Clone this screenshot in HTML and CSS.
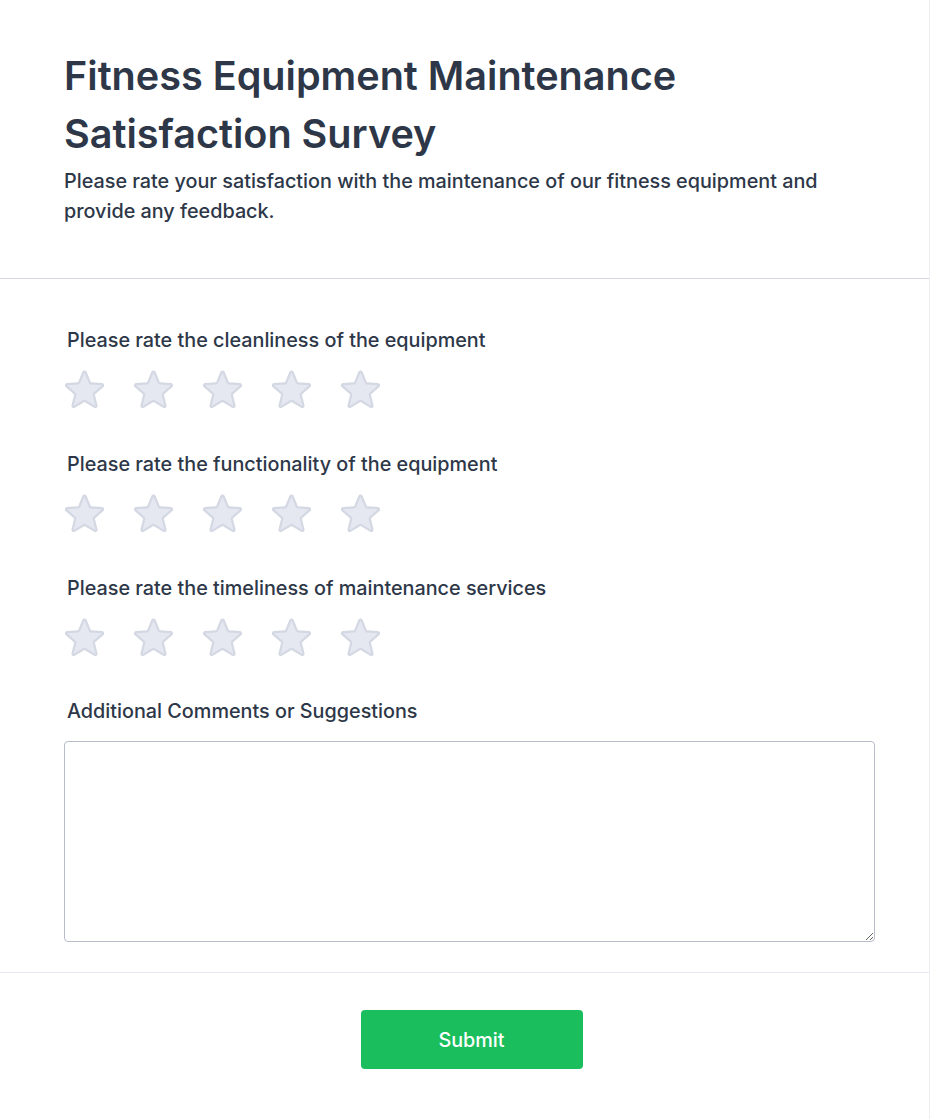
FILE: index.html
```html
<!DOCTYPE html>
<html lang="en">
<head>
<meta charset="utf-8">
<title>Fitness Equipment Maintenance Satisfaction Survey</title>
<link rel="stylesheet" href="styles.css">
</head>
<body>
<div class="card">
  <header class="head">
    <h1 class="title">Fitness Equipment Maintenance Satisfaction Survey</h1>
    <p class="subtitle">Please rate your satisfaction with the maintenance of our fitness equipment and provide any feedback.</p>
  </header>
  <form class="body">
    <div class="question">
      <div class="label">Please rate the cleanliness of the equipment</div>
      <div class="stars">
        <svg class="star" viewBox="2.4 2.4 19.2 19.2"><path d="M11.48 3.499a.562.562 0 011.04 0l2.125 5.111a.563.563 0 00.475.345l5.518.442c.499.04.701.663.321.988l-4.204 3.602a.563.563 0 00-.182.557l1.285 5.385a.562.562 0 01-.84.61l-4.725-2.885a.562.562 0 00-.586 0L6.982 20.54a.562.562 0 01-.84-.61l1.285-5.386a.562.562 0 00-.182-.557l-4.204-3.602a.563.563 0 01.321-.988l5.518-.442a.563.563 0 00.475-.345L11.48 3.5z"/></svg>
        <svg class="star" viewBox="2.4 2.4 19.2 19.2"><path d="M11.48 3.499a.562.562 0 011.04 0l2.125 5.111a.563.563 0 00.475.345l5.518.442c.499.04.701.663.321.988l-4.204 3.602a.563.563 0 00-.182.557l1.285 5.385a.562.562 0 01-.84.61l-4.725-2.885a.562.562 0 00-.586 0L6.982 20.54a.562.562 0 01-.84-.61l1.285-5.386a.562.562 0 00-.182-.557l-4.204-3.602a.563.563 0 01.321-.988l5.518-.442a.563.563 0 00.475-.345L11.48 3.5z"/></svg>
        <svg class="star" viewBox="2.4 2.4 19.2 19.2"><path d="M11.48 3.499a.562.562 0 011.04 0l2.125 5.111a.563.563 0 00.475.345l5.518.442c.499.04.701.663.321.988l-4.204 3.602a.563.563 0 00-.182.557l1.285 5.385a.562.562 0 01-.84.61l-4.725-2.885a.562.562 0 00-.586 0L6.982 20.54a.562.562 0 01-.84-.61l1.285-5.386a.562.562 0 00-.182-.557l-4.204-3.602a.563.563 0 01.321-.988l5.518-.442a.563.563 0 00.475-.345L11.48 3.5z"/></svg>
        <svg class="star" viewBox="2.4 2.4 19.2 19.2"><path d="M11.48 3.499a.562.562 0 011.04 0l2.125 5.111a.563.563 0 00.475.345l5.518.442c.499.04.701.663.321.988l-4.204 3.602a.563.563 0 00-.182.557l1.285 5.385a.562.562 0 01-.84.61l-4.725-2.885a.562.562 0 00-.586 0L6.982 20.54a.562.562 0 01-.84-.61l1.285-5.386a.562.562 0 00-.182-.557l-4.204-3.602a.563.563 0 01.321-.988l5.518-.442a.563.563 0 00.475-.345L11.48 3.5z"/></svg>
        <svg class="star" viewBox="2.4 2.4 19.2 19.2"><path d="M11.48 3.499a.562.562 0 011.04 0l2.125 5.111a.563.563 0 00.475.345l5.518.442c.499.04.701.663.321.988l-4.204 3.602a.563.563 0 00-.182.557l1.285 5.385a.562.562 0 01-.84.61l-4.725-2.885a.562.562 0 00-.586 0L6.982 20.54a.562.562 0 01-.84-.61l1.285-5.386a.562.562 0 00-.182-.557l-4.204-3.602a.563.563 0 01.321-.988l5.518-.442a.563.563 0 00.475-.345L11.48 3.5z"/></svg>
      </div>
    </div>
    <div class="question">
      <div class="label">Please rate the functionality of the equipment</div>
      <div class="stars">
        <svg class="star" viewBox="2.4 2.4 19.2 19.2"><path d="M11.48 3.499a.562.562 0 011.04 0l2.125 5.111a.563.563 0 00.475.345l5.518.442c.499.04.701.663.321.988l-4.204 3.602a.563.563 0 00-.182.557l1.285 5.385a.562.562 0 01-.84.61l-4.725-2.885a.562.562 0 00-.586 0L6.982 20.54a.562.562 0 01-.84-.61l1.285-5.386a.562.562 0 00-.182-.557l-4.204-3.602a.563.563 0 01.321-.988l5.518-.442a.563.563 0 00.475-.345L11.48 3.5z"/></svg>
        <svg class="star" viewBox="2.4 2.4 19.2 19.2"><path d="M11.48 3.499a.562.562 0 011.04 0l2.125 5.111a.563.563 0 00.475.345l5.518.442c.499.04.701.663.321.988l-4.204 3.602a.563.563 0 00-.182.557l1.285 5.385a.562.562 0 01-.84.61l-4.725-2.885a.562.562 0 00-.586 0L6.982 20.54a.562.562 0 01-.84-.61l1.285-5.386a.562.562 0 00-.182-.557l-4.204-3.602a.563.563 0 01.321-.988l5.518-.442a.563.563 0 00.475-.345L11.48 3.5z"/></svg>
        <svg class="star" viewBox="2.4 2.4 19.2 19.2"><path d="M11.48 3.499a.562.562 0 011.04 0l2.125 5.111a.563.563 0 00.475.345l5.518.442c.499.04.701.663.321.988l-4.204 3.602a.563.563 0 00-.182.557l1.285 5.385a.562.562 0 01-.84.61l-4.725-2.885a.562.562 0 00-.586 0L6.982 20.54a.562.562 0 01-.84-.61l1.285-5.386a.562.562 0 00-.182-.557l-4.204-3.602a.563.563 0 01.321-.988l5.518-.442a.563.563 0 00.475-.345L11.48 3.5z"/></svg>
        <svg class="star" viewBox="2.4 2.4 19.2 19.2"><path d="M11.48 3.499a.562.562 0 011.04 0l2.125 5.111a.563.563 0 00.475.345l5.518.442c.499.04.701.663.321.988l-4.204 3.602a.563.563 0 00-.182.557l1.285 5.385a.562.562 0 01-.84.61l-4.725-2.885a.562.562 0 00-.586 0L6.982 20.54a.562.562 0 01-.84-.61l1.285-5.386a.562.562 0 00-.182-.557l-4.204-3.602a.563.563 0 01.321-.988l5.518-.442a.563.563 0 00.475-.345L11.48 3.5z"/></svg>
        <svg class="star" viewBox="2.4 2.4 19.2 19.2"><path d="M11.48 3.499a.562.562 0 011.04 0l2.125 5.111a.563.563 0 00.475.345l5.518.442c.499.04.701.663.321.988l-4.204 3.602a.563.563 0 00-.182.557l1.285 5.385a.562.562 0 01-.84.61l-4.725-2.885a.562.562 0 00-.586 0L6.982 20.54a.562.562 0 01-.84-.61l1.285-5.386a.562.562 0 00-.182-.557l-4.204-3.602a.563.563 0 01.321-.988l5.518-.442a.563.563 0 00.475-.345L11.48 3.5z"/></svg>
      </div>
    </div>
    <div class="question">
      <div class="label">Please rate the timeliness of maintenance services</div>
      <div class="stars">
        <svg class="star" viewBox="2.4 2.4 19.2 19.2"><path d="M11.48 3.499a.562.562 0 011.04 0l2.125 5.111a.563.563 0 00.475.345l5.518.442c.499.04.701.663.321.988l-4.204 3.602a.563.563 0 00-.182.557l1.285 5.385a.562.562 0 01-.84.61l-4.725-2.885a.562.562 0 00-.586 0L6.982 20.54a.562.562 0 01-.84-.61l1.285-5.386a.562.562 0 00-.182-.557l-4.204-3.602a.563.563 0 01.321-.988l5.518-.442a.563.563 0 00.475-.345L11.48 3.5z"/></svg>
        <svg class="star" viewBox="2.4 2.4 19.2 19.2"><path d="M11.48 3.499a.562.562 0 011.04 0l2.125 5.111a.563.563 0 00.475.345l5.518.442c.499.04.701.663.321.988l-4.204 3.602a.563.563 0 00-.182.557l1.285 5.385a.562.562 0 01-.84.61l-4.725-2.885a.562.562 0 00-.586 0L6.982 20.54a.562.562 0 01-.84-.61l1.285-5.386a.562.562 0 00-.182-.557l-4.204-3.602a.563.563 0 01.321-.988l5.518-.442a.563.563 0 00.475-.345L11.48 3.5z"/></svg>
        <svg class="star" viewBox="2.4 2.4 19.2 19.2"><path d="M11.48 3.499a.562.562 0 011.04 0l2.125 5.111a.563.563 0 00.475.345l5.518.442c.499.04.701.663.321.988l-4.204 3.602a.563.563 0 00-.182.557l1.285 5.385a.562.562 0 01-.84.61l-4.725-2.885a.562.562 0 00-.586 0L6.982 20.54a.562.562 0 01-.84-.61l1.285-5.386a.562.562 0 00-.182-.557l-4.204-3.602a.563.563 0 01.321-.988l5.518-.442a.563.563 0 00.475-.345L11.48 3.5z"/></svg>
        <svg class="star" viewBox="2.4 2.4 19.2 19.2"><path d="M11.48 3.499a.562.562 0 011.04 0l2.125 5.111a.563.563 0 00.475.345l5.518.442c.499.04.701.663.321.988l-4.204 3.602a.563.563 0 00-.182.557l1.285 5.385a.562.562 0 01-.84.61l-4.725-2.885a.562.562 0 00-.586 0L6.982 20.54a.562.562 0 01-.84-.61l1.285-5.386a.562.562 0 00-.182-.557l-4.204-3.602a.563.563 0 01.321-.988l5.518-.442a.563.563 0 00.475-.345L11.48 3.5z"/></svg>
        <svg class="star" viewBox="2.4 2.4 19.2 19.2"><path d="M11.48 3.499a.562.562 0 011.04 0l2.125 5.111a.563.563 0 00.475.345l5.518.442c.499.04.701.663.321.988l-4.204 3.602a.563.563 0 00-.182.557l1.285 5.385a.562.562 0 01-.84.61l-4.725-2.885a.562.562 0 00-.586 0L6.982 20.54a.562.562 0 01-.84-.61l1.285-5.386a.562.562 0 00-.182-.557l-4.204-3.602a.563.563 0 01.321-.988l5.518-.442a.563.563 0 00.475-.345L11.48 3.5z"/></svg>
      </div>
    </div>
    <div class="question last">
      <label class="label" for="comments">Additional Comments or Suggestions</label>
      <textarea id="comments" class="comments"></textarea>
    </div>
  </form>
  <footer class="foot">
    <button type="button" class="submit">Submit</button>
  </footer>
</div>
</body>
</html>
```

FILE: styles.css
```css
html, body {
  margin: 0;
  padding: 0;
  background: #ffffff;
}

body {
  font-family: Inter, "Noto Sans", "Liberation Sans", sans-serif;
  color: #2d3748;
}

.card {
  width: 930px;
  min-height: 1119px;
  border-right: 1px solid #eceef2;
  background: #ffffff;
  box-sizing: border-box;
}

.head {
  padding: 48px 64px 52px 64px;
  border-bottom: 1px solid #d5d6e0;
}

.title {
  margin: 0;
  font-size: 39.6px;
  line-height: 57.6px;
  font-weight: 600;
  color: #2d3748;
  max-width: 760px;
}

.subtitle {
  margin: 3px 0 0 0;
  font-size: 19.8px;
  line-height: 30px;
  font-weight: 500;
  color: #2d3748;
  max-width: 790px;
}

.body {
  display: flex;
  flex-direction: column;
  padding: 48px 54px 30px 64px;
  border-bottom: 1px solid #e6e7ef;
}

.question {
  display: flex;
  flex-direction: column;
  gap: 16px;
  margin-bottom: 43px;
}

.question:nth-child(3) {
  margin-bottom: 42px;
}

.question.last {
  margin-bottom: 0;
}

.label {
  display: block;
  padding-left: 3px;
  font-size: 19.8px;
  line-height: 27px;
  font-weight: 500;
  color: #2d3748;
}

.stars {
  display: flex;
  gap: 30px;
  height: 38px;
  align-items: center;
  padding-left: 1px;
}

.star {
  width: 39px;
  height: 39px;
  display: block;
}

.star path {
  fill: #e5e8f1;
  stroke: #d4d8e3;
  stroke-width: 1.1;
  stroke-linejoin: round;
}

.comments {
  display: block;
  width: 100%;
  height: 201px;
  box-sizing: border-box;
  margin: 0;
  border: 1px solid #b9bdca;
  border-radius: 4px;
  resize: vertical;
  font-family: inherit;
  font-size: 16px;
  background: #ffffff;
}

.foot {
  display: flex;
  justify-content: center;
  padding: 37px 0 50px 14px;
}

.submit {
  width: 222px;
  height: 59px;
  border: none;
  border-radius: 4px;
  background: #1abe5c;
  color: #ffffff;
  font-family: inherit;
  font-size: 19.8px;
  font-weight: 500;
  cursor: pointer;
}
```
